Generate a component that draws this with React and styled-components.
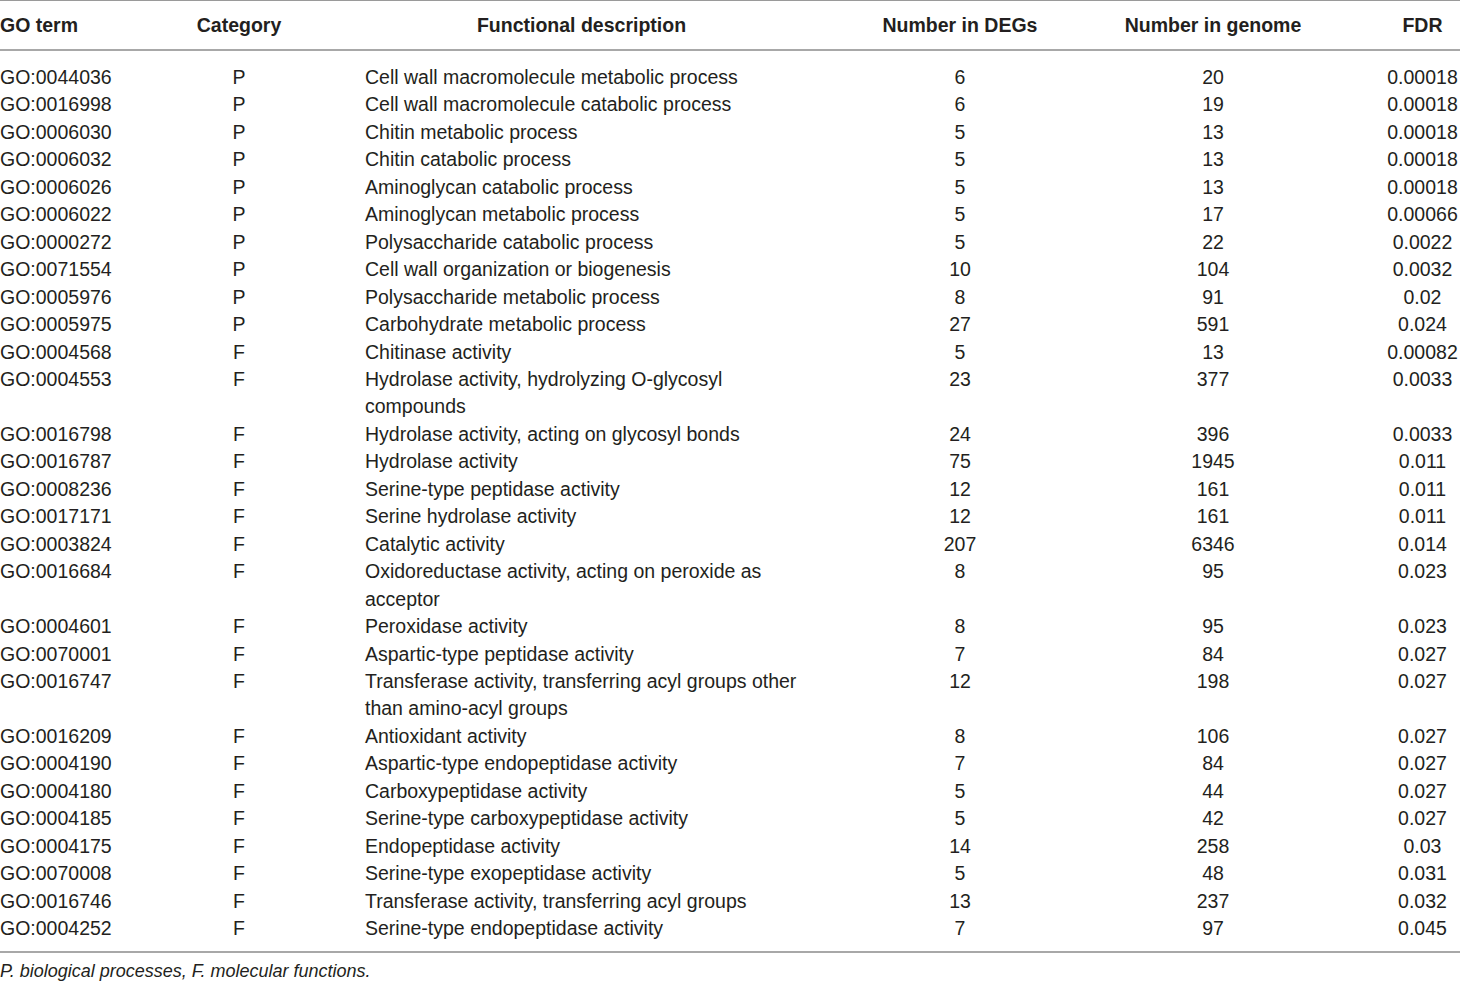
import React from 'react';
import styled, { createGlobalStyle } from 'styled-components';

const GlobalStyle = createGlobalStyle`
    html, body {
        margin: 0;
        padding: 0;
        background: #fff;
    }
    body {
        font-family: "Liberation Sans", Arial, sans-serif;
        color: #231f20;
    }
`;

const rows = [
    ['GO:0044036', 'P', 'Cell wall macromolecule metabolic process', '6', '20', '0.00018'],
    ['GO:0016998', 'P', 'Cell wall macromolecule catabolic process', '6', '19', '0.00018'],
    ['GO:0006030', 'P', 'Chitin metabolic process', '5', '13', '0.00018'],
    ['GO:0006032', 'P', 'Chitin catabolic process', '5', '13', '0.00018'],
    ['GO:0006026', 'P', 'Aminoglycan catabolic process', '5', '13', '0.00018'],
    ['GO:0006022', 'P', 'Aminoglycan metabolic process', '5', '17', '0.00066'],
    ['GO:0000272', 'P', 'Polysaccharide catabolic process', '5', '22', '0.0022'],
    ['GO:0071554', 'P', 'Cell wall organization or biogenesis', '10', '104', '0.0032'],
    ['GO:0005976', 'P', 'Polysaccharide metabolic process', '8', '91', '0.02'],
    ['GO:0005975', 'P', 'Carbohydrate metabolic process', '27', '591', '0.024'],
    ['GO:0004568', 'F', 'Chitinase activity', '5', '13', '0.00082'],
    ['GO:0004553', 'F', 'Hydrolase activity, hydrolyzing O-glycosyl compounds', '23', '377', '0.0033'],
    ['GO:0016798', 'F', 'Hydrolase activity, acting on glycosyl bonds', '24', '396', '0.0033'],
    ['GO:0016787', 'F', 'Hydrolase activity', '75', '1945', '0.011'],
    ['GO:0008236', 'F', 'Serine-type peptidase activity', '12', '161', '0.011'],
    ['GO:0017171', 'F', 'Serine hydrolase activity', '12', '161', '0.011'],
    ['GO:0003824', 'F', 'Catalytic activity', '207', '6346', '0.014'],
    ['GO:0016684', 'F', 'Oxidoreductase activity, acting on peroxide as acceptor', '8', '95', '0.023'],
    ['GO:0004601', 'F', 'Peroxidase activity', '8', '95', '0.023'],
    ['GO:0070001', 'F', 'Aspartic-type peptidase activity', '7', '84', '0.027'],
    ['GO:0016747', 'F', 'Transferase activity, transferring acyl groups other than amino-acyl groups', '12', '198', '0.027'],
    ['GO:0016209', 'F', 'Antioxidant activity', '8', '106', '0.027'],
    ['GO:0004190', 'F', 'Aspartic-type endopeptidase activity', '7', '84', '0.027'],
    ['GO:0004180', 'F', 'Carboxypeptidase activity', '5', '44', '0.027'],
    ['GO:0004185', 'F', 'Serine-type carboxypeptidase activity', '5', '42', '0.027'],
    ['GO:0004175', 'F', 'Endopeptidase activity', '14', '258', '0.03'],
    ['GO:0070008', 'F', 'Serine-type exopeptidase activity', '5', '48', '0.031'],
    ['GO:0016746', 'F', 'Transferase activity, transferring acyl groups', '13', '237', '0.032'],
    ['GO:0004252', 'F', 'Serine-type endopeptidase activity', '7', '97', '0.045'],
];

const Page = styled.div`
    width: 1460px;
    font-size: 19.5px;
`;

const Table = styled.div`
    border-top: 1px solid #9a9a9a;
    border-bottom: 2px solid #a8a8a8;
`;

const Row = styled.div`
    display: grid;
    grid-template-columns: 180px 118px 517px 290px 216px 139px;
    line-height: 27.45px;
`;

const HeadRow = styled(Row)`
    box-sizing: border-box;
    height: 50px;
    padding-top: 2px;
    align-items: center;
    font-weight: bold;
    border-bottom: 2px solid #a8a8a8;
`;

const Body = styled.div`
    padding: 13px 0 8px;
`;

const Cell = styled.div`
    text-align: ${p => p.$align || 'left'};
    padding-left: ${p => p.$pad || 0}px;
    padding-right: ${p => p.$padRight || 0}px;
    white-space: ${p => p.$wrap ? 'normal' : 'nowrap'};
`;

const Note = styled.div`
    font-style: italic;
    font-size: 18px;
    line-height: 22px;
    padding-top: 7px;
`;

function Cells({ cells, head }) {
    return (
        <>
            <Cell>{cells[0]}</Cell>
            <Cell $align="center">{cells[1]}</Cell>
            <Cell $align={head ? 'center' : 'left'} $pad={head ? 62 : 67} $padRight={12} $wrap>{cells[2]}</Cell>
            <Cell $align="center">{cells[3]}</Cell>
            <Cell $align="center">{cells[4]}</Cell>
            <Cell $align="center" $pad={64}>{cells[5]}</Cell>
        </>
    );
}

export default function App() {
    return (
        <Page>
            <GlobalStyle />
            <Table>
                <HeadRow>
                    <Cells head cells={['GO term', 'Category', 'Functional description', 'Number in DEGs', 'Number in genome', 'FDR']} />
                </HeadRow>
                <Body>
                    {rows.map(r => (
                        <Row key={r[0]}>
                            <Cells cells={r} />
                        </Row>
                    ))}
                </Body>
            </Table>
            <Note>P. biological processes, F. molecular functions.</Note>
        </Page>
    );
}
